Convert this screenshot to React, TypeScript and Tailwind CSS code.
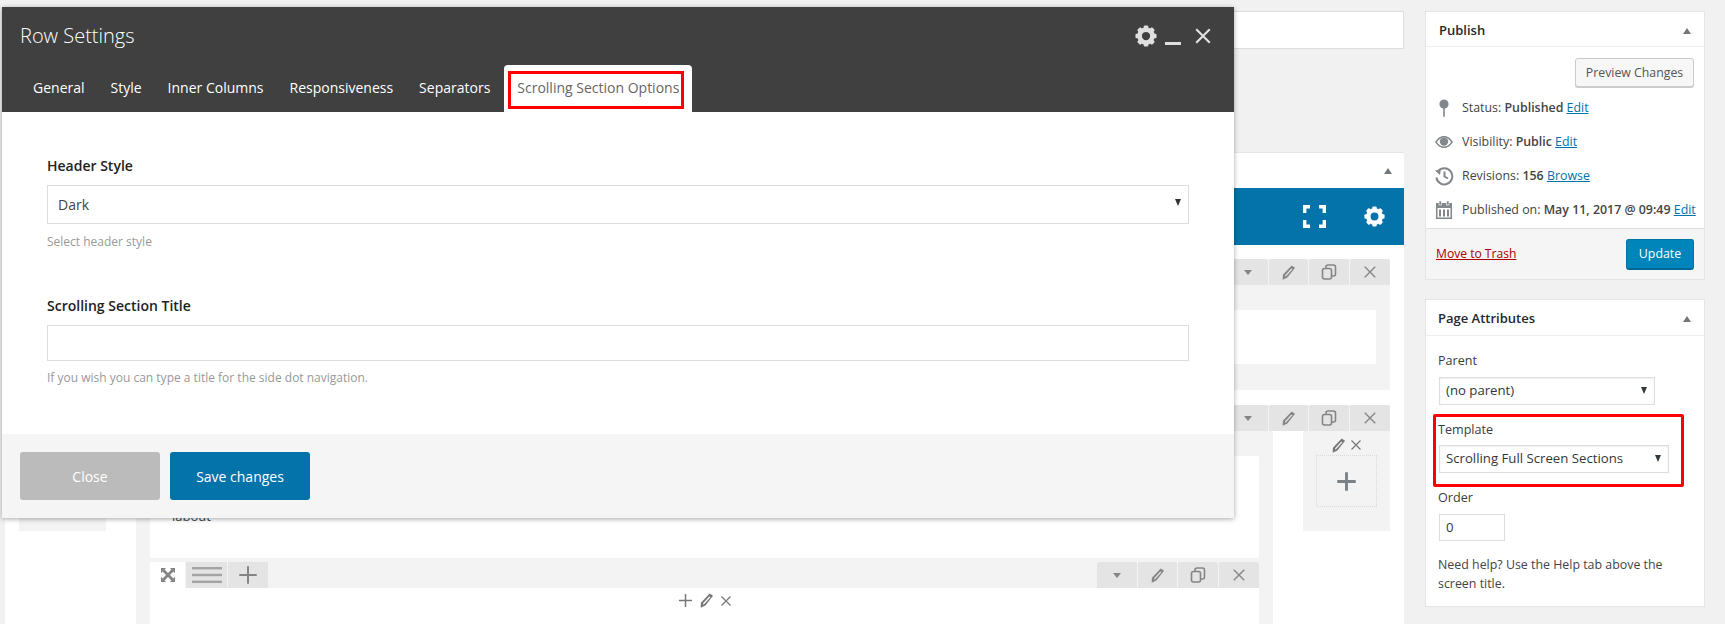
import React from "react";

const Gear = ({ size, className }: { size: number; className?: string }) => (
  <svg width={size} height={size} viewBox="0 0 24 24" className={className} fill="currentColor">
    <circle cx="12" cy="12" r="7" fill="none" stroke="currentColor" strokeWidth="5" />
    {[0, 45, 90, 135, 180, 225, 270, 315].map((a) => (
      <rect key={a} x="9.5" y="0.5" width="5" height="4" rx="1.2" transform={`rotate(${a} 12 12)`} />
    ))}
  </svg>
);

const Cross = ({ size, w = 1.6, className }: { size: number; w?: number; className?: string }) => (
  <svg width={size} height={size} viewBox="0 0 16 16" className={className} stroke="currentColor" strokeWidth={w} fill="none">
    <path d="M2 2 L14 14 M14 2 L2 14" />
  </svg>
);

const Plus = ({ size, w = 1.6, className }: { size: number; w?: number; className?: string }) => (
  <svg width={size} height={size} viewBox="0 0 16 16" className={className} stroke="currentColor" strokeWidth={w} fill="none">
    <path d="M8 1 V15 M1 8 H15" />
  </svg>
);

const Pencil = ({ size, className }: { size: number; className?: string }) => (
  <svg width={size} height={size} viewBox="0 0 16 16" className={className} fill="currentColor">
    <path d="M11.4 0.6 L15 3 L6.8 13.4 L1.8 15.8 L2 10.4 Z M11 3.6 L4.4 11 L4.4 12.4 L5.6 11.8 L12.2 4.4 Z" fillRule="evenodd" />
  </svg>
);

const Copy = ({ size, className }: { size: number; className?: string }) => (
  <svg width={size} height={size} viewBox="0 0 16 16" className={className} fill="none" stroke="currentColor" strokeWidth="1.6">
    <rect x="1.5" y="4.5" width="9" height="10.5" rx="2" />
    <path d="M5 4.5 V3 a2 2 0 0 1 2 -2 H12.5 a2 2 0 0 1 2 2 V10 a2 2 0 0 1 -2 2 H10.5" />
  </svg>
);

const Caret = ({ className }: { className?: string }) => (
  <svg width="8" height="5" viewBox="0 0 8 5" className={className} fill="currentColor">
    <path d="M0 0 H8 L4 5 Z" />
  </svg>
);

const SelectCaret = ({ className }: { className?: string }) => (
  <svg width="6" height="7" viewBox="0 0 6 7" className={className} fill="currentColor">
    <path d="M0 0 H6 L3 7 Z" />
  </svg>
);

const Up = () => (
  <svg width="8" height="6" viewBox="0 0 8 6" fill="#72777c" className="ml-auto">
    <path d="M0 6 H8 L4 0 Z" />
  </svg>
);

const Fullscreen = () => (
  <svg width="23" height="23" viewBox="0 0 23 23" fill="none" stroke="#fff" strokeWidth="3.4">
    <path d="M1.7 8 V1.7 H7 M16 1.7 H21.3 V8 M21.3 15 V21.3 H16 M7 21.3 H1.7 V15" />
  </svg>
);

const Expand = () => (
  <svg width="14" height="14" viewBox="0 0 15 15" fill="#858585">
    <path d="M0 0 H5.5 L3.8 1.7 L7.5 5.4 L11.2 1.7 L9.5 0 H15 V5.5 L13.3 3.8 L9.6 7.5 L13.3 11.2 L15 9.5 V15 H9.5 L11.2 13.3 L7.5 9.6 L3.8 13.3 L5.5 15 H0 V9.5 L1.7 11.2 L5.4 7.5 L1.7 3.8 L0 5.5 Z" />
  </svg>
);

const Lines = () => (
  <svg width="30" height="18" viewBox="0 0 30 18" fill="#a3a3a3">
    <rect y="1" width="30" height="2.4" />
    <rect y="7.8" width="30" height="2.4" />
    <rect y="14.6" width="30" height="2.4" />
  </svg>
);

const PinIcon = () => (
  <svg width="20" height="20" viewBox="0 0 20 20" fill="#82878c">
    <circle cx="10" cy="6" r="4.6" />
    <rect x="9.2" y="8" width="1.6" height="11" rx="0.8" />
  </svg>
);
const EyeIcon = () => (
  <svg width="20" height="20" viewBox="0 0 20 20">
    <path d="M1 10 C4 5.5 7 4 10 4 C13 4 16 5.5 19 10 C16 14.5 13 16 10 16 C7 16 4 14.5 1 10 Z" fill="#82878c" />
    <path d="M2.8 10 C5 7 7.5 5.5 10 5.5 C12.5 5.5 15 7 17.2 10 C15 13 12.5 14.5 10 14.5 C7.5 14.5 5 13 2.8 10 Z" fill="#fff" />
    <circle cx="10" cy="9.6" r="4.2" fill="#82878c" />
  </svg>
);
const HistoryIcon = () => (
  <svg width="20" height="20" viewBox="0 0 20 20" fill="none" stroke="#82878c" strokeWidth="2">
    <path d="M4.2 5.2 A8 8 0 1 1 2.4 11.5" />
    <path d="M10.5 5.5 V10.5 L14 12.5" />
    <path d="M1 4.5 L6.8 3.6 L6 9 Z" fill="#82878c" stroke="none" />
  </svg>
);
const CalendarIcon = () => (
  <svg width="20" height="20" viewBox="0 0 20 20" fill="#82878c">
    <path fillRule="evenodd" d="M2 3 H18 V19 H2 Z M3.5 8 V17.5 H16.5 V8 Z" />
    <rect x="5" y="1" width="2.4" height="4" fill="#82878c" stroke="#fff" strokeWidth="0.6" />
    <rect x="12.6" y="1" width="2.4" height="4" fill="#82878c" stroke="#fff" strokeWidth="0.6" />
    <rect x="5" y="9.5" width="2" height="7" />
    <rect x="9" y="9.5" width="2" height="7" />
    <rect x="13" y="9.5" width="2" height="7" />
  </svg>
);

const ToolBtn = ({ children, w = "w-[40px]" }: { children: React.ReactNode; w?: string }) => (
  <div className={`${w} h-[26px] bg-[#e4e4e4] rounded-t-[2px] flex items-center justify-center text-[#858585]`}>{children}</div>
);

const Tools = () => (
  <div className="flex gap-px">
    <ToolBtn>
      <Caret className="text-[#858585]" />
    </ToolBtn>
    <ToolBtn w="w-[39px]">
      <Pencil size={15} />
    </ToolBtn>
    <ToolBtn>
      <Copy size={16} />
    </ToolBtn>
    <ToolBtn>
      <Cross size={14} />
    </ToolBtn>
  </div>
);

const Tab = ({ label }: { label: string }) => (
  <div className="px-[13px] h-[47px] pb-[2px] flex items-center text-[14px] text-white">{label}</div>
);

const Meta = ({ icon, children }: { icon: React.ReactNode; children: React.ReactNode }) => (
  <div className="h-[34px] flex items-center">
    <div className="w-[20px] flex justify-center ml-[-2px] mr-[8px] shrink-0">{icon}</div>
    <div className="whitespace-nowrap">{children}</div>
  </div>
);

const Edit = ({ children = "Edit" }: { children?: React.ReactNode }) => (
  <a className="text-[#0073aa] underline">{children}</a>
);

const SideSelect = ({ w, label }: { w: string; label: string }) => (
  <div className={`${w} h-[28px] border border-[#ddd] shadow-[inset_0_1px_2px_rgba(0,0,0,0.07)] flex items-center justify-between pl-[6px] pr-[7px] text-[13.2px] text-[#32373c] bg-white`}>
    <span>{label}</span>
    <SelectCaret className="text-[#32373c] mb-[2px]" />
  </div>
);

export default function App() {
  return (
    <div className="relative w-[1725px] h-[624px] overflow-hidden bg-[#f1f1f1] flex font-['Open_Sans',sans-serif] text-[12.4px] text-[#444]">
      {/* Page editor column */}
      <div className="w-[1404px] pl-[5px] shrink-0 flex flex-col">
        <div className="mt-[11px] h-[38px] bg-white border border-[#ddd]" />
        <div className="mt-[103px] flex-1 bg-white border-t border-[#e5e5e5] flex flex-col min-h-0">
          <div className="h-[35px] flex items-center pr-[12px] shrink-0">
            <Up />
          </div>
          <div className="h-[57px] bg-[#0473aa] flex items-center justify-end pr-[19px] gap-[38px] shrink-0 text-white">
            <Fullscreen />
            <Gear size={21} className="text-white" />
          </div>
          <div className="flex flex-1 pt-[14px] pl-[14px] pr-[14px] min-h-0">
            <div className="w-[117px] shrink-0 pt-[146px]">
              <div className="w-[87px] h-[126px] bg-[#f3f3f3]" />
            </div>
            <div className="flex-1 flex flex-col min-w-0">
              {/* first row */}
              <div className="h-[131px] bg-[#f3f3f3] flex flex-col">
                <div className="flex justify-end">
                  <Tools />
                </div>
                <div className="mt-[25px] ml-[14px] mr-[14px] h-[54px] bg-white" />
              </div>
              {/* second row */}
              <div className="mt-[15px] h-[26px] bg-[#f3f3f3] flex justify-end">
                <Tools />
              </div>
              <div className="flex flex-1 min-h-0">
                <div className="w-[1137px] bg-[#f3f3f3] px-[14px] pt-[25px] flex flex-col">
                  <div className="h-[102px] bg-white rounded-[2px] pl-[22px] pt-[50px] text-[13px] text-[#444] leading-[20px]">
                    labout
                  </div>
                  <div className="h-[30px] pt-[4px] flex justify-between shrink-0">
                    <div className="flex gap-px">
                      <div className="w-[35px] h-[26px] bg-white flex items-center justify-center">
                        <Expand />
                      </div>
                      <div className="w-[41px] h-[26px] bg-[#e4e4e4] flex items-center justify-center">
                        <Lines />
                      </div>
                      <div className="w-[40px] h-[26px] bg-[#e4e4e4] flex items-center justify-center text-[#858585]">
                        <Plus size={20} />
                      </div>
                    </div>
                    <Tools />
                  </div>
                  <div className="flex-1 bg-white flex justify-center gap-[6px] pt-[5px] pl-[1px] text-[#777]">
                    <Plus size={15} />
                    <Pencil size={15} />
                    <Cross size={12} className="mt-[2px]" />
                  </div>
                </div>
                <div className="w-[30px] shrink-0" />
                <div className="w-[87px] h-[100px] bg-[#f3f3f3] flex flex-col items-center">
                  <div className="flex items-center gap-[4px] mt-[4px] h-[20px] text-[#777]">
                    <Pencil size={15} />
                    <Cross size={12} />
                  </div>
                  <div className="w-[61px] h-[52px] border border-dotted border-[#d9d9d9] flex items-center justify-center text-[#7a8288]">
                    <Plus size={21} w={2.2} />
                  </div>
                </div>
              </div>
            </div>
          </div>
        </div>
      </div>

      {/* Side column */}
      <div className="ml-[22px] w-[278px] shrink-0 pt-[12px] flex flex-col gap-[21px] text-[#444]">
        <div className="h-[267px] bg-white shadow-[0_0_0_1px_#e5e5e5] flex flex-col">
          <div className="h-[35px] pt-[3px] border-b border-[#eee] flex items-center pl-[13px] pr-[13px] shrink-0">
            <span className="text-[13px] font-semibold text-[#23282d]">Publish</span>
            <Up />
          </div>
          <div className="flex-1 flex flex-col px-[10px] relative">
            <div className="flex justify-end pt-[11px]">
              <div className="w-[119px] h-[29px] pt-px rounded-[3px] border border-[#ccc] bg-[#f7f7f7] shadow-[0_1px_0_#ccc] flex items-center justify-center text-[#555] text-[12.3px]">
                Preview Changes
              </div>
            </div>
            <div className="mt-[4px]">
              <Meta icon={<PinIcon />}>
                Status: <b className="font-semibold">Published</b> <Edit />
              </Meta>
              <Meta icon={<EyeIcon />}>
                Visibility: <b className="font-semibold">Public</b> <Edit />
              </Meta>
              <Meta icon={<HistoryIcon />}>
                Revisions: <b className="font-semibold">156</b> <Edit>Browse</Edit>
              </Meta>
              <Meta icon={<CalendarIcon />}>
                Published on: <b className="font-semibold">May 11, 2017 @ 09:49</b> <Edit />
              </Meta>
            </div>
          </div>
          <div className="h-[51px] bg-[#f5f5f5] border-t border-[#ddd] flex items-center justify-between pl-[10px] pr-[10px] shrink-0">
            <a className="text-[#a00] underline text-[12.1px]">Move to Trash</a>
            <div className="w-[68px] h-[31px] pt-[2px] rounded-[3px] bg-[#0085ba] border border-[#0073aa] border-b-[2px] border-b-[#006799] flex items-center justify-center text-white">
              Update
            </div>
          </div>
        </div>

        <div className="relative h-[306px] bg-white shadow-[0_0_0_1px_#e5e5e5] flex flex-col">
          <div className="h-[36px] pt-[3px] border-b border-[#eee] flex items-center pl-[12px] pr-[13px] shrink-0">
            <span className="text-[13px] font-semibold text-[#23282d]">Page Attributes</span>
            <Up />
          </div>
          <div className="pl-[12px] pt-[15px]">
            <div className="leading-[20px] text-[12.6px] text-[#3c3c3c] font-medium">Parent</div>
            <div className="mt-[6px] ml-px">
              <SideSelect w="w-[216px]" label="(no parent)" />
            </div>
            <div className="mt-[15px] leading-[20px] text-[12.6px] text-[#3c3c3c] font-medium">Template</div>
            <div className="mt-[5px] ml-px">
              <SideSelect w="w-[230px]" label="Scrolling Full Screen Sections" />
            </div>
            <div className="mt-[15px] leading-[20px] text-[12.6px] text-[#3c3c3c] font-medium">Order</div>
            <div className="mt-[6px] ml-px w-[66px] h-[27px] border border-[#ddd] flex items-center pl-[6px] text-[13.2px] text-[#32373c]">0</div>
            <div className="mt-[14px] leading-[19px] w-[240px]">Need help? Use the Help tab above the screen title.</div>
          </div>
          <div className="absolute left-[7px] top-[114px] w-[251px] h-[73px] border-[3px] border-[#f00] rounded-[2px]" />
        </div>
      </div>

      {/* Row Settings modal */}
      <div className="absolute left-[2px] top-[7px] w-[1232px] h-[511px] bg-white shadow-[0_1px_5px_rgba(0,0,0,0.35)] flex flex-col">
        <div className="h-[105px] bg-[#404040] flex flex-col shrink-0">
          <div className="h-[58px] flex items-center justify-between pl-[18px] pr-[22px]">
            <span className="text-[20px] font-light text-white">Row Settings</span>
            <div className="flex items-center text-[#e0e0e0]">
              <Gear size={22} />
              <div className="w-[16px] h-[3px] bg-[#e0e0e0] ml-[8px] mt-[15px]" />
              <Cross size={18} w={1.9} className="ml-[13px]" />
            </div>
          </div>
          <div className="flex pl-[18px]">
            <Tab label="General" />
            <Tab label="Style" />
            <Tab label="Inner Columns" />
            <Tab label="Responsiveness" />
            <Tab label="Separators" />
            <div className="relative ml-px px-[13px] h-[47px] pb-[2px] bg-white rounded-t-[4px] flex items-center text-[14px] text-[#666]">
              Scrolling Section Options
              <div className="absolute left-[4px] right-[8px] top-[6px] bottom-[3px] border-[3px] border-[#f00]" />
            </div>
          </div>
        </div>
        <div className="flex-1 px-[45px] pt-[44px] text-[14px]">
          <div className="font-semibold text-[#222] leading-[20px]">Header Style</div>
          <div className="mt-[9px] h-[39px] border border-[#ddd] flex items-center justify-between pl-[10px] pr-[7px] text-[#444]">
            <span>Dark</span>
            <SelectCaret className="text-[#333] mb-[4px]" />
          </div>
          <div className="mt-[8px] text-[12px] leading-[20px] text-[#999]">Select header style</div>
          <div className="mt-[44px] font-semibold text-[#222] leading-[20px]">Scrolling Section Title</div>
          <div className="mt-[9px] h-[36px] border border-[#ddd]" />
          <div className="mt-[7px] text-[12px] leading-[20px] text-[#999]">If you wish you can type a title for the side dot navigation.</div>
        </div>
        <div className="h-[84px] bg-[#f5f5f5] flex items-start gap-[10px] pl-[18px] pt-[18px] shrink-0 text-[14px] text-white">
          <div className="w-[140px] h-[48px] rounded-[3px] bg-[#bbb] flex items-center justify-center">Close</div>
          <div className="w-[140px] h-[48px] rounded-[3px] bg-[#0473aa] flex items-center justify-center">Save changes</div>
        </div>
      </div>
    </div>
  );
}
